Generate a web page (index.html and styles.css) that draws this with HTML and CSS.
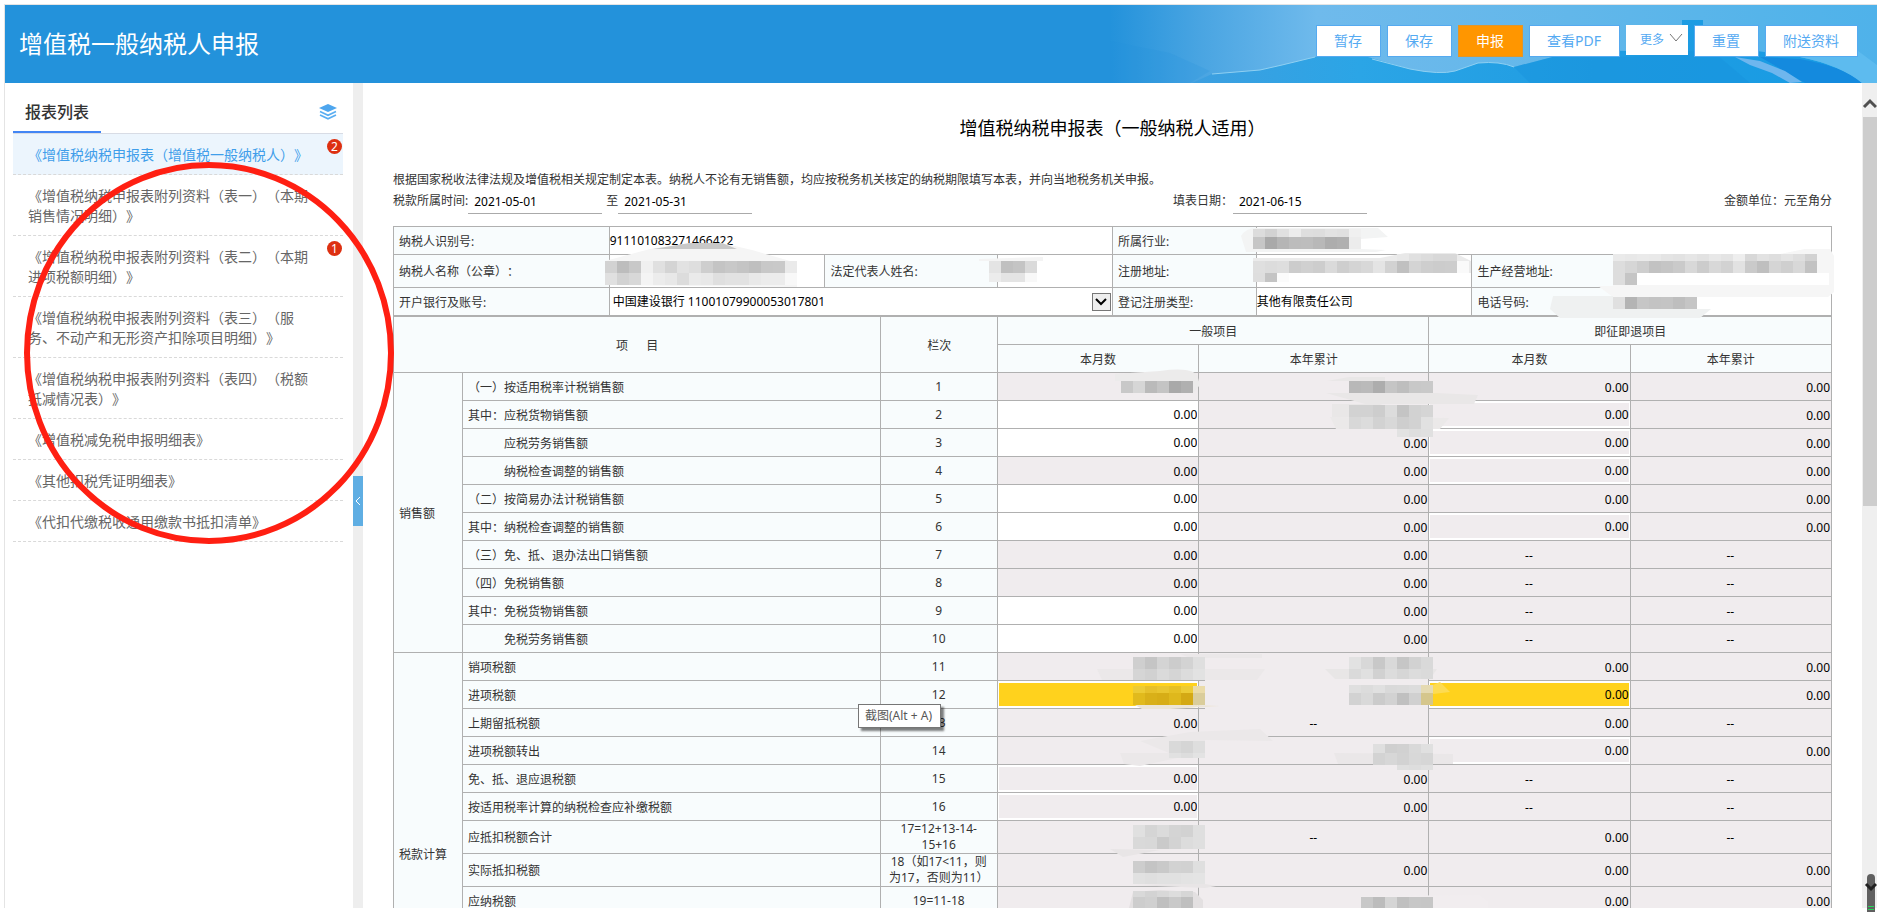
FILE: index.html
```
<!DOCTYPE html>
<html lang="zh-CN">
<head>
<meta charset="utf-8">
<title>增值税一般纳税人申报</title>
<link rel="stylesheet" href="styles.css">
</head>
<body>
<div class="app">
  <header class="topbar">
    <svg class="topbar-art" viewBox="0 0 767 78" preserveAspectRatio="none" aria-hidden="true">
      <defs>
        <linearGradient id="sky" x1="0" x2="1" y1="0" y2="0">
          <stop offset="0" stop-color="#2392db"/><stop offset="0.12" stop-color="#4aa5e2"/><stop offset="0.27" stop-color="#6fbaec"/><stop offset="0.6" stop-color="#62b7ea"/><stop offset="0.85" stop-color="#55b4ea"/><stop offset="1" stop-color="#4fb2ea"/>
        </linearGradient>
        <linearGradient id="sea" x1="0" x2="1" y1="0" y2="0">
          <stop offset="0" stop-color="#3d9fe0"/><stop offset="0.25" stop-color="#2ba5e6"/><stop offset="0.6" stop-color="#1f9ce2"/><stop offset="1" stop-color="#189ce4"/>
        </linearGradient>
      </defs>
      <rect width="767" height="78" fill="url(#sky)"/>
      <path d="M0 36L60 48L100 66L80 78H0Z" fill="#2392db" opacity=".2"/>
      <path d="M82 78L102 69L150 65L172 60L205 52H258L300 64Q330 70 345 66L368 58Q390 56 404 62L450 50Q480 44 520 46L560 36L572 28V15H593V32L605 40L690 52Q730 60 752 78Z" fill="url(#sea)"/>
      <path d="M102 69L150 65L172 60L205 52M262 54L300 64Q330 70 345 66L368 58Q390 56 404 62" fill="none" stroke="#8fd0f2" stroke-width="1"/>
      <path d="M404 62L450 50L520 52L600 44L640 78H420Z" fill="#1790dc" opacity=".4"/>
      <path d="M650 52L690 54Q735 62 752 78H695Z" fill="#148ade"/>
      <path d="M625 52L650 56L675 66L692 77L680 78L662 68L640 60Z" fill="#83bdf0" opacity=".8"/>
      <path d="M690 52Q730 60 752 78H767V60L740 40Z" fill="#5dbbef"/>
    </svg>
    <h1 class="topbar-title">增值税一般纳税人申报</h1>
    <div class="toolbar">
      <button type="button" class="btn">暂存</button>
      <button type="button" class="btn">保存</button>
      <button type="button" class="btn btn-primary">申报</button>
      <button type="button" class="btn">查看PDF</button>
      <button type="button" class="btn btn-more">更多<svg width="14" height="10" viewBox="0 0 14 10" aria-hidden="true"><path d="M1 1L7 8L13 1" fill="none" stroke="#777"/></svg></button>
      <button type="button" class="btn">重置</button>
      <button type="button" class="btn">附送资料</button>
    </div>
  </header>

  <div class="body">
    <nav class="side">
      <div class="side-head">
        <h2 class="side-title">报表列表</h2>
        <svg class="side-icon" width="18" height="16" viewBox="0 0 18 16" aria-hidden="true"><path d="M9 0L18 4L9 8L0 4Z" fill="#4ea6ee"/><path d="M1 7.500L9 11.200L17 7.500M1 11L9 14.800L17 11" fill="none" stroke="#5aaef2" stroke-width="1.700"/></svg>
      </div>
      <ul class="list">
        <li class="item is-active"><a href="#">《增值税纳税申报表（增值税一般纳税人）》</a><span class="badge">2</span></li>
        <li class="item"><a href="#">《增值税纳税申报表附列资料（表一）（本期销售情况明细）》</a></li>
        <li class="item"><a href="#">《增值税纳税申报表附列资料（表二）（本期进项税额明细）》</a><span class="badge">1</span></li>
        <li class="item"><a href="#">《增值税纳税申报表附列资料（表三）（服务、不动产和无形资产扣除项目明细）》</a></li>
        <li class="item"><a href="#">《增值税纳税申报表附列资料（表四）（税额抵减情况表）》</a></li>
        <li class="item"><a href="#">《增值税减免税申报明细表》</a></li>
        <li class="item"><a href="#">《其他扣税凭证明细表》</a></li>
        <li class="item"><a href="#">《代扣代缴税收通用缴款书抵扣清单》</a></li>
      </ul>
    </nav>
    <div class="splitter">
      <button type="button" class="collapse" aria-label="收起"><svg width="6" height="10" viewBox="0 0 6 10" aria-hidden="true"><path d="M5 1L1 5L5 9" fill="none" stroke="#fff"/></svg></button>
    </div>

    <main class="main">
      <h2 class="form-title">增值税纳税申报表（一般纳税人适用）</h2>
      <p class="intro">根据国家税收法律法规及增值税相关规定制定本表。纳税人不论有无销售额，均应按税务机关核定的纳税期限填写本表，并向当地税务机关申报。</p>
      <div class="dates">
        <div class="date-group">
          <label for="from">税款所属时间:</label><input id="from" class="date" value="2021-05-01">
          <label for="to" class="to">至</label><input id="to" class="date" value="2021-05-31">
        </div>
        <div class="date-group"><label for="filled">填表日期：</label><input id="filled" class="date" value="2021-06-15"></div>
        <div class="unit">金额单位：元至角分</div>
      </div>

      <table class="grid info">
        <colgroup><col class="w15"><col class="w15"><col class="w12"><col class="w8"><col class="w10"><col class="w15"><col class="w10"><col class="w15"></colgroup>
        <tr><th>纳税人识别号:</th><td colspan="3">911101083271466422</td><th>所属行业:</th><td colspan="3"></td></tr>
        <tr class="tall"><th>纳税人名称（公章）：</th><td></td><th>法定代表人姓名:</th><td></td><th>注册地址:</th><td></td><th>生产经营地址:</th><td></td></tr>
        <tr><th><label for="bank">开户银行及账号:</label></th><td colspan="3"><div class="select-box"><select id="bank"><option>中国建设银行 11001079900053017801</option></select><span class="select-arrow"><svg width="12" height="8" viewBox="0 0 12 8" aria-hidden="true"><path d="M1 1L6 6L11 1" fill="none" stroke="#000" stroke-width="2"/></svg></span></div></td><th>登记注册类型:</th><td>其他有限责任公司</td><th>电话号码:</th><td></td></tr>
      </table>

      <table class="grid data">
        <colgroup><col class="c-group"><col class="c-name"><col class="c-no"><col class="w14"><col class="w16"><col class="w14"><col class="w14"></colgroup>
        <thead>
          <tr><th colspan="2" rowspan="2">项 &emsp;&nbsp;目</th><th rowspan="2">栏次</th><th colspan="2">一般项目</th><th colspan="2">即征即退项目</th></tr>
          <tr><th>本月数</th><th>本年累计</th><th>本月数</th><th>本年累计</th></tr>
        </thead>
        <tbody>
          <tr><th rowspan="10">销售额</th><th>（一）按适用税率计税销售额</th><td class="no">1</td><td class="lock"></td><td class="lock"></td><td class="lock">0.00</td><td class="lock">0.00</td></tr>
          <tr><th>其中：应税货物销售额</th><td class="no">2</td><td><input aria-label="2 本月数" class="num" value="0.00"></td><td class="lock"></td><td><input aria-label="2 即征即退本月数" class="num dim" value="0.00"></td><td class="lock">0.00</td></tr>
          <tr><th class="indent">应税劳务销售额</th><td class="no">3</td><td><input aria-label="3 本月数" class="num" value="0.00"></td><td class="lock">0.00</td><td><input aria-label="3 即征即退本月数" class="num dim" value="0.00"></td><td class="lock">0.00</td></tr>
          <tr><th class="indent">纳税检查调整的销售额</th><td class="no">4</td><td class="lock">0.00</td><td class="lock">0.00</td><td><input aria-label="4 即征即退本月数" class="num dim" value="0.00"></td><td class="lock">0.00</td></tr>
          <tr><th>（二）按简易办法计税销售额</th><td class="no">5</td><td><input aria-label="5 本月数" class="num" value="0.00"></td><td class="lock">0.00</td><td class="lock">0.00</td><td class="lock">0.00</td></tr>
          <tr><th>其中：纳税检查调整的销售额</th><td class="no">6</td><td><input aria-label="6 本月数" class="num" value="0.00"></td><td class="lock">0.00</td><td><input aria-label="6 即征即退本月数" class="num dim" value="0.00"></td><td class="lock">0.00</td></tr>
          <tr><th>（三）免、抵、退办法出口销售额</th><td class="no">7</td><td class="lock">0.00</td><td class="lock">0.00</td><td class="lock none">--</td><td class="lock none">--</td></tr>
          <tr><th>（四）免税销售额</th><td class="no">8</td><td class="lock">0.00</td><td class="lock">0.00</td><td class="lock none">--</td><td class="lock none">--</td></tr>
          <tr><th>其中：免税货物销售额</th><td class="no">9</td><td><input aria-label="9 本月数" class="num" value="0.00"></td><td class="lock">0.00</td><td class="lock none">--</td><td class="lock none">--</td></tr>
          <tr><th class="indent">免税劳务销售额</th><td class="no">10</td><td><input aria-label="10 本月数" class="num" value="0.00"></td><td class="lock">0.00</td><td class="lock none">--</td><td class="lock none">--</td></tr>
        </tbody>
        <tbody>
          <tr><th rowspan="14">税款计算</th><th>销项税额</th><td class="no">11</td><td class="lock"></td><td class="lock"></td><td class="lock">0.00</td><td class="lock">0.00</td></tr>
          <tr><th>进项税额</th><td class="no">12</td><td><input aria-label="12 本月数" class="num warn"></td><td class="lock"></td><td><input aria-label="12 即征即退本月数" class="num warn" value="0.00"></td><td class="lock">0.00</td></tr>
          <tr><th>上期留抵税额</th><td class="no">13</td><td class="lock">0.00</td><td class="lock none">--</td><td class="lock">0.00</td><td class="lock none">--</td></tr>
          <tr><th>进项税额转出</th><td class="no">14</td><td class="lock"></td><td class="lock"></td><td><input aria-label="14 即征即退本月数" class="num dim" value="0.00"></td><td class="lock">0.00</td></tr>
          <tr><th>免、抵、退应退税额</th><td class="no">15</td><td><input aria-label="15 本月数" class="num dim" value="0.00"></td><td class="lock">0.00</td><td class="lock none">--</td><td class="lock none">--</td></tr>
          <tr><th>按适用税率计算的纳税检查应补缴税额</th><td class="no">16</td><td><input aria-label="16 本月数" class="num dim" value="0.00"></td><td class="lock">0.00</td><td class="lock none">--</td><td class="lock none">--</td></tr>
          <tr class="formula"><th>应抵扣税额合计</th><td class="no">17=12+13-14-<br>15+16</td><td class="lock"></td><td class="lock none">--</td><td class="lock">0.00</td><td class="lock none">--</td></tr>
          <tr class="formula"><th>实际抵扣税额</th><td class="no">18（如17&lt;11，则<br>为17，否则为11）</td><td class="lock"></td><td class="lock">0.00</td><td class="lock">0.00</td><td class="lock">0.00</td></tr>
          <tr><th>应纳税额</th><td class="no">19=11-18</td><td class="lock"></td><td class="lock"></td><td class="lock">0.00</td><td class="lock">0.00</td></tr>
          <tr><th></th><td class="no"></td><td></td><td></td><td></td><td></td></tr>
          <tr><th></th><td class="no"></td><td></td><td></td><td></td><td></td></tr>
          <tr><th></th><td class="no"></td><td></td><td></td><td></td><td></td></tr>
          <tr><th></th><td class="no"></td><td></td><td></td><td></td><td></td></tr>
          <tr><th></th><td class="no"></td><td></td><td></td><td></td><td></td></tr>
        </tbody>
      </table>
    </main>

    <div class="scroll" aria-hidden="true">
      <svg width="15" height="11" viewBox="0 0 15 11"><path d="M2 9L8 3L14 9" fill="none" stroke="#505050" stroke-width="3"/></svg>
      <div class="thumb"></div>
    </div>
  </div>
</div>

<svg class="overlay" id="overlay" aria-hidden="true">
  <g id="smudges"></g>
  <ellipse cx="209" cy="353" rx="182" ry="188" fill="none" stroke="#ff1f12" stroke-width="6"/>
  <path d="M1867 912V878Q1867 874 1871 874T1875 878V912Z" fill="#606060"/>
  <path d="M1866 884L1871 889L1876 884" fill="none" stroke="#222" stroke-width="3"/>
  <path d="M1868 906.500H1874M1868 909.500H1874" stroke="#27d35b"/>
</svg>
<div class="tooltip" role="tooltip">截图(Alt + A)</div>
<script src="script.js"></script>
</body>
</html>
```
FILE: styles.css
```
* { box-sizing: border-box; }
body {
  margin: 0;
  padding: 4px 0 4px 4px;
  background: #fff;
  color: #333;
  font: 12px/16px "Noto Sans", "Noto Sans CJK SC", sans-serif;
  text-spacing-trim: space-all;
  overflow: hidden;
}
h1, h2, p, ul { margin: 0; padding: 0; font-weight: 400; }
button, input, select { font: inherit; color: inherit; margin: 0; border-radius: 0; }

.app {
  display: flex;
  flex-direction: column;
  height: calc(100vh - 8px);
  border: 1px solid #e4e4e4;
  border-width: 1px 0 0 1px;
}

/* header */
.topbar {
  position: relative;
  display: flex;
  flex: none;
  align-items: center;
  justify-content: space-between;
  height: 78px;
  padding: 0 19px 0 14px;
  background: #2392db;
}
.topbar-art { position: absolute; top: 0; right: 0; width: 767px; height: 78px; }
.topbar-title { position: relative; color: #fff; font-size: 24px; line-height: 32px; }
.toolbar { position: relative; display: flex; gap: 6px; margin-bottom: 6px; }
.btn {
  height: 32px;
  padding: 0 18px 0 17px;
  border: 1px solid #55aaf0;
  background: #fff;
  color: #55aaf2;
  font-size: 14px;
  line-height: 28px;
  white-space: nowrap;
}
.btn-primary { background: #ff9600; border-color: #e0962c; color: #fff; }
.btn-more {
  display: flex;
  align-items: center;
  gap: 5px;
  width: 62px;
  height: 30px;
  padding: 0 4px 0 13px;
  border-color: #fff;
  font-size: 12px;
}
.btn-more svg { flex: none; margin-bottom: 4px; }

.body { display: flex; flex: 1; min-height: 0; }

/* report list */
.side { flex: none; width: 348px; padding: 0 10px 0 8px; }
.side-head {
  display: flex;
  align-items: center;
  justify-content: space-between;
  height: 51px;
  padding: 0 6px 0 0;
  border-bottom: 1px solid #d8dce5;
}
.side-title {
  height: 50px;
  padding: 18px 12px 0;
  border-bottom: 2px solid #4285f4;
  font-size: 16px;
  font-weight: 500;
  line-height: 22px;
  width: 88px;
  white-space: nowrap;
}
.side-icon { margin-top: 8px; }
.list { list-style: none; }
.item {
  position: relative;
  padding: 11px 30px 9px 15px;
  border-bottom: 1px dashed #d9d9d9;
  font-size: 14px;
  line-height: 20px;
}
.item a { color: #666; text-decoration: none; }
.item.is-active { background: #ecf5fd; }
.item.is-active a { color: #409eea; }
.badge {
  position: absolute;
  top: 5px;
  right: 1px;
  width: 15px;
  height: 15px;
  border-radius: 50%;
  background: #dd3011;
  color: #fff;
  font-size: 12px;
  line-height: 15px;
  text-align: center;
}
.splitter { display: flex; flex: none; align-items: center; width: 10px; padding-top: 10px; background: #eee; }
.collapse {
  display: flex;
  align-items: center;
  justify-content: center;
  width: 10px;
  height: 50px;
  padding: 0;
  border: 0;
  background: #5faee3;
}

/* form */
.main { flex: 1; min-width: 0; padding: 30px 30px 0; overflow: hidden; }
.form-title { color: #000; font-size: 18px; line-height: 30px; text-align: center; }
.intro { margin-top: 27px; line-height: 20px; white-space: nowrap; }
.dates { display: grid; grid-template-columns: 54.2% auto 1fr; height: 24px; margin-bottom: 12px; line-height: 22px; }
.date-group { display: flex; }
.date { width: 134px; height: 24px; padding: 0 6px 1px; border: 0; border-bottom: 1px solid #aaa; background: none; color: #000; }
.to { margin-left: 4px; }
.unit { text-align: right; }

.grid { width: 100%; border-collapse: collapse; table-layout: fixed; }
.grid th, .grid td { border: 1px solid #b0b0b0; padding: 0 1px 0 0; height: 28px; }
.grid th { padding: 2px 0 0 5px; background: #f8fcfd; font-weight: 400; text-align: left; }
.w8 { width: 8%; }
.w10 { width: 10%; }
.w12 { width: 12%; }
.w14 { width: 14%; }
.w15 { width: 15%; }
.w16 { width: 16%; }
.c-group { width: 4.8%; }
.c-name { width: 29.1%; }
.c-no { width: 8.1%; }

.info td { padding-top: 1px; color: #000; }
.info .tall td, .info .tall th { height: 33px; }
.select-box { position: relative; }
.select-box select { display: block; appearance: none; width: 100%; height: 20px; padding: 0 24px 0 3px; border: 0; background: none; color: #000; }
.select-arrow {
  position: absolute;
  top: 1px;
  right: 0;
  display: flex;
  align-items: center;
  justify-content: center;
  width: 19px;
  height: 18px;
  border: 1px solid #777;
  background: #eee;
  pointer-events: none;
}

.data thead th { padding-left: 0; text-align: center; }
.data td { color: #000; text-align: right; }
.data .no { background: #f8fcfd; color: #333; text-align: center; }
.data .lock { background: #f0ecee; padding-top: 2px; }
.data .none { text-align: center; }
.data .indent { padding-left: 41px; }
.data .formula th { height: 32px; }
.data .formula + .formula th { height: 33px; }
.num { display: block; width: 100%; height: 23px; padding: 0; border: 0; border-left: 1px solid #fff; background: #fff; color: #000; text-align: right; }
.dim { background: #f0ecee; }
.warn { background: #ffd21d; }

.scroll { flex: none; width: 15px; padding-top: 15px; background: #efefef; }
.scroll svg { display: block; margin-bottom: 8px; }
.thumb { height: 48%; margin-left: 1px; background: #cdcdcd; }

/* floating layer */
.overlay { position: absolute; inset: 0; width: 100%; height: 100%; pointer-events: none; }
.tooltip {
  position: absolute;
  left: 858px;
  top: 704px;
  padding: 2px 8px 2px 6px;
  border: 1px solid #767676;
  background: #fff;
  box-shadow: 3px 3px 2px rgba(0, 0, 0, .5);
  color: #575757;
  line-height: 18px;
  white-space: nowrap;
}
```
FILE: script.js
```
// Soft background patches: path data and fill.
const patches = [
  ['M605 261L650 249L690 243H722L752 250L790 261L797 264V287L605 285Z', '#f5f5f5'],
  ['M653 249L690 243H722L737 249Z', '#c8c8c8'],
  ['M979 259L1043 257V261H979Z', '#f4f4f4'],
  ['M1241 236Q1246 228 1256 228H1378L1388 237L1361 239V249L1386 250L1376 252H1246Z', '#f3f4f4'],
  ['M1253 261V258H1380L1405 253H1455L1471 261V273L1262 272Z', '#ebebeb'],
  ['M1598 286H1613V262Q1613 254 1622 254H1780L1805 249H1830L1834 256V292L1828 297H1613Z', '#f6f6f6'],
  ['M1637 273H1829V285H1637Z', '#fff'],
  ['M1550 309L1553 296H1613V309H1711L1700 318H1560Z', '#eff1f1'],
  ['M1115 374L1160 371Q1195 366 1198 378L1200 385L1193 393V381H1115Z', '#ecebeb'],
  ['M1326 393H1436L1478 395L1474 404H1365Z', '#e9e7e7'],
  ['M1349 377H1385V381H1327Z', '#e9e7e7'],
  ['M1330 417L1336 429H1440L1449 418Z', '#ebe9e9'],
  ['M1332 404H1380L1397 410H1349V417H1332Z', '#e9e7e7'],
  ['M1097 669L1102 680H1257L1265 669Z', '#ebe8e9'],
  ['M1180 654H1262V658H1190Z', '#ebe8e9'],
  ['M1325 669L1335 679H1430L1437 669Z', '#e8e6e6'],
  ['M1205 680H1428V709H1205Z', '#f0ecee'],
  ['M1135 705H1195L1220 706L1170 709H1142Z', '#ece5d6'],
  ['M1433 685L1440 682L1450 692L1433 694Z', '#fddb52'],
  ['M1140 741L1190 732L1260 729L1273 741L1205 740V752L1140 766L1124 764L1120 753H1169Z', '#ebe8e9'],
  ['M1334 753L1338 764H1453V754Z', '#eae7e8'],
  ['M1110 849L1123 857L1160 850Z', '#e8e5e6'],
  ['M1133 885L1205 888L1216 886L1200 883Z', '#e8e5e6'],
  ['M1133 892L1160 890L1195 892L1203 900V908H1129Z', '#e3e0e1'],
  ['M1361 896L1480 895L1488 901V908H1361Z', '#f1edef']
];

// Mosaic strips: x, y, height, one grey level (or colour) per 12px block.
const strips = [
  [605, 261, 12, 'd2 bd c8 f0 e0 d4 e2 de ce c4 c8 c4 bf c8 c9 ea'],
  [605, 273, 12, 'e0 d2 d8 f4 ec e8 dc ea e8 df e2 e2 e9 ec ec f8'],
  [989, 261, 12, 'e4 c0 c4 da'],
  [989, 273, 9, 'ec e4 e4 f8'],
  [1253, 229, 8, 'dc d2 e0 ec de dd e2 e0 f0'],
  [1253, 237, 12, 'c6 a9 b5 bc bd b8 ad b0 ec'],
  [1253, 261, 12, 'df dc de cc d0 cd da ce d4 d8 e4 d2 c0 d4 ce cc cd fa'],
  [1397, 254, 7, 'e8 e0 dc d8 d8'],
  [1253, 273, 9, 'de c4 fb'],
  [1613, 254, 7, 'ea e8 ea e9 e4 e2 e6 e2 e8 e4 ee d8 e2 de e4 de d2'],
  [1613, 261, 12, 'dd d6 ce c2 c5 ca d8 cc d8 d2 e2 ca bf d5 cf d8 c2'],
  [1613, 273, 12, 'dd c5'],
  [1613, 297, 12, 'e0 b4 c6 c3 c4 be c5'],
  [1121, 381, 12, 'c8 d6 ba c4 a9 b0'],
  [1349, 381, 12, 'b8 ba ad c5 be c8 c9'],
  [1349, 405, 12, 'd2 d2 cd dc c4 d2 d5'],
  [1349, 417, 12, 'd8 dc d2 d8 ce d2 e1'],
  [1397, 429, 8, 'e2 de e0'],
  [1133, 657, 12, 'cf c5 d4 cc d3 df'],
  [1133, 669, 11, 'd5 d1 da d5 dc e2'],
  [1349, 657, 12, 'e2 d8 c8 d9 c6 d2 d9'],
  [1349, 669, 10, 'da e0 d1 dc d6 dc da'],
  [1133, 686, 7, '#eccb35 #e6c02b #e9c52f #e5c025 #eccb35 #eadba8'],
  [1133, 693, 12, '#e1ba1c #d9b018 #d7ad16 #dfb81c #d4a914 #dacd9b'],
  [1349, 685, 8, 'df dc e0 d9 da dc #e5dab2'],
  [1349, 693, 12, 'd2 d9 cb d2 c0 d0 #d5c68c'],
  [1169, 741, 12, 'd9 d5 de'],
  [1169, 753, 5, 'e1 dd e3'],
  [1373, 744, 9, 'df cf d1 d9 e0'],
  [1373, 753, 12, 'd3 d7 d2 d8 d6'],
  [1397, 765, 5, 'df dd e0'],
  [1133, 825, 12, 'e0 d5 db d4 d2 df'],
  [1133, 837, 12, 'd9 d8 ca d3 dc df'],
  [1133, 861, 12, 'cd c4 c9 d2 d1 df'],
  [1133, 873, 11, 'e1 df e1 e1 e3 e4'],
  [1133, 891, 6, 'd9 d3 d8 dd d6'],
  [1133, 897, 11, 'cd d0 bf c9 bf'],
  [1361, 897, 11, 'c8 bc d5 c0 c7 c6']
];

const layer = document.getElementById('smudges');
function add(tag, attrs) {
  const node = document.createElementNS('http://www.w3.org/2000/svg', tag);
  for (const key in attrs) node.setAttribute(key, attrs[key]);
  layer.appendChild(node);
}
patches.forEach(([d, fill]) => add('path', { d, fill }));
strips.forEach(([x, y, height, tones]) => {
  tones.split(' ').forEach((tone, i) => {
    const fill = tone.length === 2 ? '#' + tone.repeat(3) : tone;
    add('rect', { x: x + i * 12, y, width: 12, height, fill });
  });
});
```
